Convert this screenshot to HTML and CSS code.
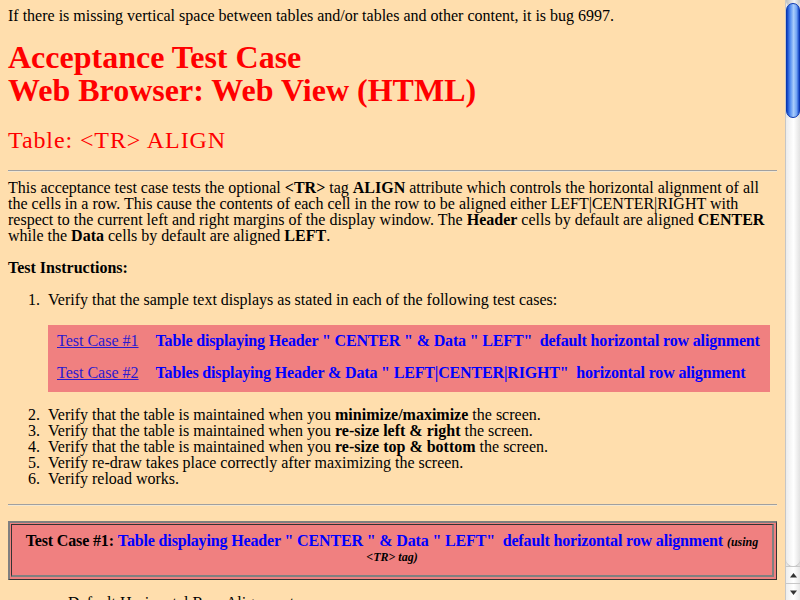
FILE: index.html
```html
<!DOCTYPE html>
<html>
<head>
<meta charset="utf-8">
<title>Acceptance Test Case</title>
<link rel="stylesheet" href="styles.css">
</head>
<body>
<div class="window">
  <div class="page">
    <p class="bug">If there is missing vertical space between tables and/or tables and other content, it is bug 6997.</p>
    <h1 class="title">Acceptance Test Case<br>Web Browser: Web View (HTML)</h1>
    <h2 class="subtitle">Table: &lt;TR&gt; ALIGN</h2>
    <hr class="rule">
    <p class="text">This acceptance test case tests the optional <b>&lt;TR&gt;</b> tag <b>ALIGN</b> attribute which controls the horizontal alignment of all the cells in a row. This cause the contents of each cell in the row to be aligned either LEFT|CENTER|RIGHT with respect to the current left and right margins of the display window. The <b>Header</b> cells by default are aligned <b>CENTER</b> while the <b>Data</b> cells by default are aligned <b>LEFT</b>.</p>
    <p class="text head"><b>Test Instructions:</b></p>
    <ol class="steps">
      <li>Verify that the sample text displays as stated in each of the following test cases:
        <div class="cases">
          <a class="case-link" href="#tc1">Test Case #1</a>
          <span class="case-title">Table displaying Header " CENTER " &amp; Data " LEFT"&nbsp; default horizontal row alignment</span>
          <a class="case-link" href="#tc2">Test Case #2</a>
          <span class="case-title">Tables displaying Header &amp; Data " LEFT|CENTER|RIGHT"&nbsp; horizontal row alignment</span>
        </div>
      </li>
      <li>Verify that the table is maintained when you <b>minimize/maximize</b> the screen.</li>
      <li>Verify that the table is maintained when you <b>re-size left &amp; right</b> the screen.</li>
      <li>Verify that the table is maintained when you <b>re-size top &amp; bottom</b> the screen.</li>
      <li>Verify re-draw takes place correctly after maximizing the screen.</li>
      <li>Verify reload works.</li>
    </ol>
    <hr class="rule rule2">
    <div class="tc-box" id="tc1">
      <div class="tc-cell"><b class="tight">Test Case #1:</b> <b class="blue tight">Table displaying Header " CENTER " &amp; Data " LEFT"&nbsp; default horizontal row alignment</b> <i class="small">(using &lt;TR&gt; tag)</i></div>
    </div>
    <p class="text caption">Default Horizontal Row Alignment</p>
  </div>
  <div class="scrollbar">
    <div class="cap"></div>
    <div class="thumb"></div>
    <div class="track"></div>
    <div class="btn"><svg width="15" height="17" viewBox="0 0 15 17"><path d="M4 10.5 L7.5 6 L11 10.5 Z" fill="#333"/></svg></div>
    <div class="btn"><svg width="15" height="17" viewBox="0 0 15 17"><path d="M4 6.5 L7.5 11 L11 6.5 Z" fill="#333"/></svg></div>
  </div>
</div>
</body>
</html>
```

FILE: styles.css
```css
html, body {
  margin: 0;
  padding: 0;
  overflow: hidden;
}
body {
  background: #ffdead;
  font-family: "Liberation Serif", "Times New Roman", serif;
  font-size: 16px;
  line-height: 16px;
  color: #000;
}
.window {
  display: flex;
  height: 600px;
  width: 800px;
  overflow: hidden;
}
.page {
  flex: 1;
  padding: 8px;
  overflow: hidden;
  min-width: 0;
}
.bug {
  margin: 0;
}
.title {
  color: #ff0000;
  font-size: 32px;
  line-height: 33px;
  font-weight: bold;
  margin: 17px 0 0;
}
.subtitle {
  color: #ff0000;
  font-size: 24px;
  line-height: 28px;
  font-weight: normal;
  letter-spacing: 0.9px;
  margin: 19px 0 0;
}
.rule {
  border: 0;
  border-top: 1px solid #a0a0a0;
  border-bottom: 1px solid #f2e6d0;
  height: 0;
  margin: 16px 0 0;
}
.text {
  margin: 8px 0 0;
}
.head {
  margin-top: 16px;
}
.steps {
  margin: 16px 0 0;
  padding-left: 40px;
}
.steps li::marker {
  content: counter(list-item) ".\2002";
}
.cases {
  display: inline-grid;
  grid-template-columns: auto auto;
  column-gap: 17px;
  row-gap: 16px;
  background: #f08080;
  padding: 8px 10px 11px 9px;
  margin: 17px 0 15px;
  font-weight: bold;
  white-space: nowrap;
}
.case-link {
  color: #2a1ad0;
  font-weight: normal;
  text-decoration: underline;
}
.case-title {
  color: #0000ff;
  letter-spacing: -0.16px;
}
.rule2 {
  margin-top: 17px;
}
.tc-box {
  margin-top: 15px;
  background: #f08080;
  border-style: solid;
  border-width: 2px 1px 1px 2px;
  border-color: #808080 #333 #333 #808080;
  padding: 1px 2px 2px 1px;
}
.tc-cell {
  border-style: solid;
  border-width: 1px 2px 2px 1px;
  border-color: #333 #808080 #808080 #333;
  text-align: center;
  line-height: 13px;
  padding: 9px 4px 11px;
}
.tight {
  letter-spacing: -0.15px;
}
.blue {
  color: #0000ff;
}
.small {
  font-size: 12px;
  font-weight: bold;
}
.caption {
  margin-top: 15px;
  padding-left: 60px;
}
.scrollbar {
  width: 15px;
  flex: none;
  display: flex;
  flex-direction: column;
  background: linear-gradient(to right, #e6e6e6, #fafafa 60%, #dcdcdc);
  border-left: 1px solid #c8c8c8;
  box-sizing: border-box;
}
.cap {
  height: 7px;
  border-radius: 0 0 6px 6px;
  background: linear-gradient(to right, #bdbdbd, #f4f4f4 60%, #c4c4c4);
}
.thumb {
  height: 115px;
  border-radius: 7px;
  margin-top: -4px;
  background: linear-gradient(to right, #0b3fc4, #4f8af0 25%, #a9cdfb 55%, #6fa2f4 80%, #1747c8);
  border: 1px solid #0a38b0;
  box-sizing: border-box;
}
.track {
  flex: 1;
  border-radius: 0 0 7px 7px;
  background: linear-gradient(to right, #ececec, #ffffff 55%, #e2e2e2);
  box-shadow: 0 1px 1px #bbb;
}
.btn {
  height: 17px;
  border-top: 1px solid #c8c8c8;
  background: linear-gradient(to right, #eeeeee, #ffffff 55%, #e6e6e6);
  box-sizing: border-box;
}
.btn svg {
  display: block;
}
```
